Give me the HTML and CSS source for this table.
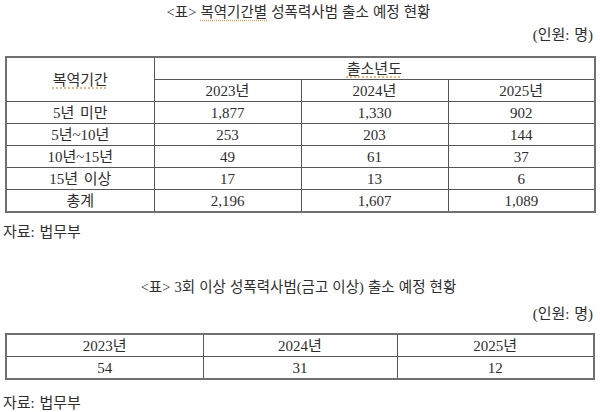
FILE: index.html
```html
<!DOCTYPE html>
<html lang="ko">
<head>
<meta charset="utf-8">
<link rel="stylesheet" href="styles.css">
</head>
<body>
<div class="page">
  <div class="title">&lt;표&gt; <span class="spell">복역기간별</span> 성폭력사범 출소 예정 현황</div>
  <div class="unit">(인원: 명)</div>
  <table class="grid grid-a">
    <colgroup>
      <col class="c-first"><col class="c-year"><col class="c-year"><col class="c-year">
    </colgroup>
    <tr><td rowspan="2"><span class="spell">복역기간</span></td><td colspan="3"><span class="spell">출소년도</span></td></tr>
    <tr><td>2023년</td><td>2024년</td><td>2025년</td></tr>
    <tr><td>5년 미만</td><td>1,877</td><td>1,330</td><td>902</td></tr>
    <tr><td>5년~10년</td><td>253</td><td>203</td><td>144</td></tr>
    <tr><td>10년~15년</td><td>49</td><td>61</td><td>37</td></tr>
    <tr><td>15년 이상</td><td>17</td><td>13</td><td>6</td></tr>
    <tr><td>총계</td><td>2,196</td><td>1,607</td><td>1,089</td></tr>
  </table>
  <div class="source source-a">자료: 법무부</div>

  <div class="title title-b">&lt;표&gt; 3회 이상 성폭력사범(금고 이상) 출소 예정 현황</div>
  <div class="unit unit-b">(인원: 명)</div>
  <table class="grid grid-b">
    <colgroup>
      <col class="c-b1"><col class="c-b2"><col class="c-b3">
    </colgroup>
    <tr><td>2023년</td><td>2024년</td><td>2025년</td></tr>
    <tr><td>54</td><td>31</td><td>12</td></tr>
  </table>
  <div class="source source-b">자료: 법무부</div>
</div>
</body>
</html>
```

FILE: styles.css
```css
html, body {
  margin: 0;
  padding: 0;
  background: #ffffff;
}
body {
  font-family: "Liberation Serif", "Noto Sans CJK KR", serif;
  color: #2e2e2e;
  font-size: 15px;
}
.page {
  width: 587px;
  margin-left: 5px;
  display: flex;
  flex-direction: column;
}
.title {
  text-align: center;
  font-size: 14.5px;
  line-height: 24px;
  height: 24px;
  word-spacing: 0.5px;
}
.spell {
  text-decoration: underline dotted #f0a050;
  text-underline-offset: 3px;
}
.unit {
  text-align: right;
  line-height: 22px;
  height: 22px;
  margin-right: -1px;
  word-spacing: 1px;
}
.grid {
  border-collapse: collapse;
  table-layout: fixed;
  width: 588px;
  border: 2px solid #707070;
}
.grid-a { margin-top: 10px; }
.grid td {
  border: 1px solid #555555;
  padding: 0;
  height: 21px;
  line-height: 20px;
  text-align: center;
  font-size: 15px;
  white-space: nowrap;
  word-spacing: 2px;
}
.c-first { width: 148px; }
.c-year { width: 147px; }
.c-b1 { width: 197px; }
.c-b2 { width: 194px; }
.c-b3 { width: 197px; }
.source {
  line-height: 22px;
  height: 22px;
  margin-left: -2px;
  word-spacing: 1px;
}
.source-a { margin-top: 8px; }
.title-b { margin-top: 33px; line-height: 22px; height: 22px; }
.unit-b { margin-top: 5px; }
.grid-b { margin-top: 8px; }
.source-b { margin-top: 12px; }
```
